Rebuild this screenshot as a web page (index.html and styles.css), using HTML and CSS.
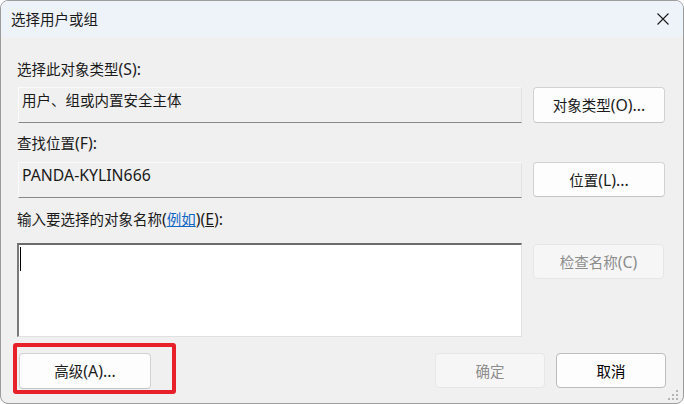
FILE: index.html
```html
<!DOCTYPE html>
<html lang="zh-CN">
<head>
<meta charset="utf-8" />
<title>选择用户或组</title>
<link rel="stylesheet" href="styles.css">
</head>
<body>
<section class="window">
  <header class="titlebar">
    <span class="title">选择用户或组</span>
    <span class="close">
      <svg width="12" height="12" viewBox="0 0 12 12"><path d="M0.5 0.5 L11.5 11.5 M11.5 0.5 L0.5 11.5" stroke="#1a1a1a" stroke-width="1.1" fill="none"/></svg>
    </span>
  </header>
  <div class="content">
    <div class="label first">选择此对象类型<span class="en">(S):</span></div>
    <div class="row">
      <div class="field">用户、组或内置安全主体</div>
      <button class="btn wide">对象类型<span class="en">(O)...</span></button>
    </div>
    <div class="label second">查找位置<span class="en">(F):</span></div>
    <div class="row gap9">
      <div class="field"><span class="en">PANDA-KYLIN666</span></div>
      <button class="btn wide short">位置<span class="en">(L)...</span></button>
    </div>
    <div class="label third">输入要选择的对象名称<span class="en">(</span><a class="link" href="#">例如</a><span class="en">)(<u>E</u>):</span></div>
    <div class="row gap14">
      <div class="input"><div class="caret"></div></div>
      <button class="btn wide short offset disabled">检查名称<span class="en">(C)</span></button>
    </div>
    <div class="actions">
      <button class="btn wide advanced">高级<span class="en">(A)...</span></button>
      <span class="spacer"></span>
      <button class="btn small short disabled">确定</button>
      <button class="btn small short cancel">取消</button>
    </div>
  </div>
  <div class="highlight"></div>
  <svg class="grip" width="12" height="12" viewBox="0 0 12 12">
    <rect x="8" y="0" width="2" height="2" fill="#b4b4b4"/>
    <rect x="4" y="4" width="2" height="2" fill="#b4b4b4"/>
    <rect x="8" y="4" width="2" height="2" fill="#b4b4b4"/>
    <rect x="0" y="8" width="2" height="2" fill="#b4b4b4"/>
    <rect x="4" y="8" width="2" height="2" fill="#b4b4b4"/>
    <rect x="8" y="8" width="2" height="2" fill="#b4b4b4"/>
  </svg>
</section>
</body>
</html>
```
FILE: styles.css
```css
body {
  margin: 0;
  padding: 0;
  background: #fff;
  font: normal 14.5px/20px "Noto Sans", "Noto Sans CJK SC", sans-serif;
  color: #1a1a1a;
}

/* latin runs are set a bit larger, as YaHei UI does */
.en {
  font-size: 15.8px;
  line-height: 20px;
}

.window {
  position: relative;
  width: 684px;
  height: 404px;
  box-sizing: border-box;
  border: 1px solid #9c9c9c;
  border-radius: 8px;
  overflow: hidden;
  background: #f0f0f0;
}

.titlebar {
  display: flex;
  align-items: center;
  height: 36px;
  padding: 0 14px 0 10px;
  background: #eef2f9;
}

.title {
  color: #1a1a1a;
}

.close {
  margin-left: auto;
  display: flex;
}

.content {
  padding: 0 17px 0 16px;
}

.label {
  height: 20px;
}

.label.first { margin-top: 22px; }
.label.second { margin-top: 10px; }
.label.third { margin-top: 11px; }

.link {
  color: #0f66c4;
}

.row {
  display: flex;
  gap: 11px;
  margin-top: 8px;
}

.row.gap9 { margin-top: 9px; }
.row.gap14 { margin-top: 14px; }

.field {
  width: 504px;
  height: 36px;
  margin-left: 1px;
  box-sizing: border-box;
  padding: 2px 0 0 3px;
  border: 1px solid #fafafa;
  border-bottom-color: #888;
  border-right-color: #e2e2e2;
  background: #f0f0f0;
}

.input {
  width: 505px;
  height: 94px;
  box-sizing: border-box;
  border-style: solid;
  border-width: 2px 1px 1px 2px;
  border-color: #6b6b6b #e0e0e0 #e0e0e0 #7a7a7a;
  background: #fff;
  padding: 2px 0 0 1px;
}

.caret {
  width: 1px;
  height: 24px;
  background: #000;
}

.btn {
  box-sizing: border-box;
  height: 36px;
  padding: 0;
  font: inherit;
  color: #1a1a1a;
  background: #fdfdfd;
  border: 1px solid #d2d2d2;
  border-bottom-color: #c4c4c4;
  border-radius: 4px;
}

.btn.wide { width: 132px; }
.btn.small { width: 110px; }
.btn.short { height: 35px; }
.btn.offset { margin-top: 1px; width: 131px; }

.btn.disabled {
  color: #8c8c8c;
  background: #f6f6f6;
  border-color: #e6e6e6;
}

.btn.cancel {
  border-color: #bdbdbd;
  color: #000;
}

.actions {
  display: flex;
  gap: 11px;
  margin-top: 16px;
}

.advanced {
  margin-left: 2px;
}

.spacer {
  flex: 1;
}

.highlight {
  position: absolute;
  left: 12px;
  top: 342px;
  width: 163px;
  height: 51px;
  box-sizing: border-box;
  border: 4px solid #e8202a;
  border-radius: 3px;
}

.grip {
  position: absolute;
  right: 3px;
  bottom: 1px;
}
```
